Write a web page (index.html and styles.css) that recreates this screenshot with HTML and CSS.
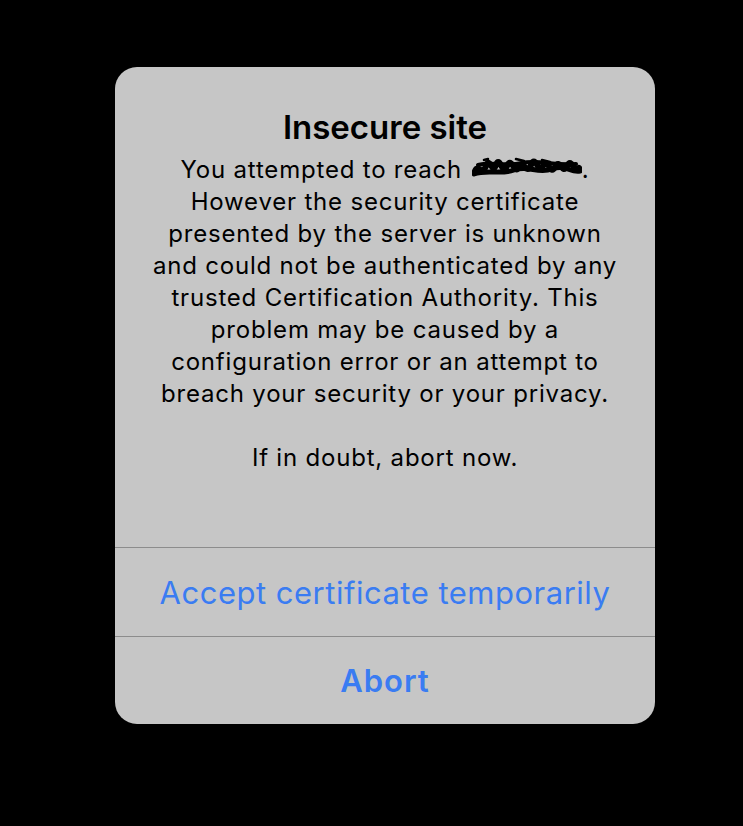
FILE: index.html
```html
<!DOCTYPE html>
<html lang="en">
<head>
  <meta charset="UTF-8">
  <title>Insecure site</title>
  <meta name="viewport" content="width=device-width, initial-scale=1.0">
  <link rel="stylesheet" href="styles.css">
</head>
<body>
  <div class="alert">
    <div class="alert-body">
      <h1 class="alert-title">Insecure site</h1>
      <p class="alert-text">
        You attempted to reach <span class="redacted"><svg width="110" height="24" viewBox="0 0 110 24"><path d="M3 14 C6 6 10 20 14 9 S20 19 24 8 S30 20 35 9 S42 19 47 10 S54 20 59 8 S66 19 71 9 S78 20 83 10 S90 19 95 9 S102 18 107 11" fill="none" stroke="#000" stroke-width="6" stroke-linecap="round"/><path d="M2 17 C15 12 28 18 42 13 S66 17 80 12 S98 16 108 14" fill="none" stroke="#000" stroke-width="5" stroke-linecap="round"/><path d="M6 8 C20 4 34 10 50 6 S80 9 104 7" fill="none" stroke="#000" stroke-width="4" stroke-linecap="round"/><path d="M12 3 L16 2 M44 2 L52 4 M70 3 L78 5" stroke="#000" stroke-width="2.5" stroke-linecap="round"/></svg></span>.<br>
        However the security certificate<br>
        presented by the server is unknown<br>
        and could not be authenticated by any<br>
        trusted Certification Authority. This<br>
        problem may be caused by a<br>
        configuration error or an attempt to<br>
        breach your security or your privacy.
      </p>
      <p class="alert-text">If in doubt, abort now.</p>
    </div>
    <button class="alert-action">Accept certificate temporarily</button>
    <button class="alert-action alert-action-bold">Abort</button>
  </div>
</body>
</html>
```

FILE: styles.css
```css
body {
  margin: 0;
  min-height: 826px;
  background: #000;
  font-family: 'Inter', 'Roboto', sans-serif;
  padding: 67px 0 0 115px;
  box-sizing: border-box;
}
.alert {
  width: 540px;
  background: #c6c6c6;
  border-radius: 22px;
  overflow: hidden;
  display: flex;
  flex-direction: column;
}
.alert-body {
  height: 480px;
  box-sizing: border-box;
  padding: 40px 8px 0 8px;
  text-align: center;
  color: #000;
}
.alert-title {
  margin: 0 0 7px 0;
  font-size: 33px;
  line-height: 40px;
  font-weight: 600;
}
.alert-text {
  margin: 0 0 32px 0;
  font-size: 24px;
  line-height: 32px;
  letter-spacing: 0.8px;
  white-space: nowrap;
}
.redacted {
  display: inline-block;
  vertical-align: -3px;
  line-height: 0;
  margin-left: 2px;
}
.alert-action {
  height: 89px;
  border: none;
  border-top: 1px solid #8c8c8c;
  background: transparent;
  color: #3a7cf2;
  font-family: inherit;
  font-size: 31px;
  letter-spacing: 0.5px;
  padding: 0;
}
.alert-action-bold {
  font-weight: 600;
  letter-spacing: 1px;
  height: 88px;
}
```
